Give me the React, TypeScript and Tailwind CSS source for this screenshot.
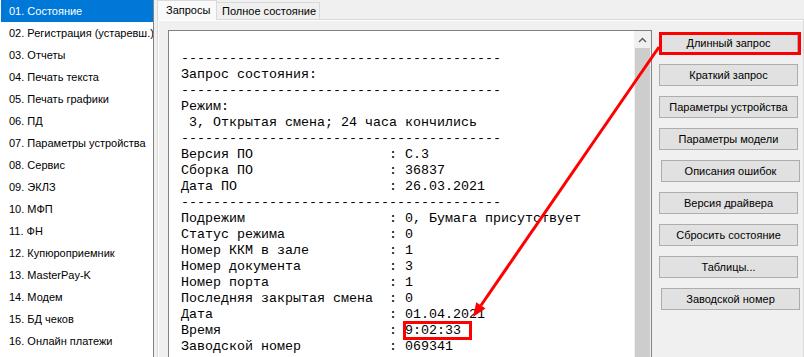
import React from "react";

const items = [
  "01. Состояние",
  "02. Регистрация (устаревш.)",
  "03. Отчеты",
  "04. Печать текста",
  "05. Печать графики",
  "06. ПД",
  "07. Параметры устройства",
  "08. Сервис",
  "09. ЭКЛЗ",
  "10. МФП",
  "11. ФН",
  "12. Купюроприемник",
  "13. MasterPay-K",
  "14. Модем",
  "15. БД чеков",
  "16. Онлайн платежи",
];

const dash = "-".repeat(40);
const pad = (s: string) => s + " ".repeat(Math.max(0, 26 - s.length));

const lines: string[] = [
  "",
  dash,
  "Запрос состояния:",
  dash,
  "Режим:",
  " 3, Открытая смена; 24 часа кончились",
  dash,
  pad("Версия ПО") + ": C.3",
  pad("Сборка ПО") + ": 36837",
  pad("Дата ПО") + ": 26.03.2021",
  dash,
  pad("Подрежим") + ": 0, Бумага присутствует",
  pad("Статус режима") + ": 0",
  pad("Номер ККМ в зале") + ": 1",
  pad("Номер документа") + ": 3",
  pad("Номер порта") + ": 1",
  pad("Последняя закрытая смена") + ": 0",
  pad("Дата") + ": 01.04.2021",
  pad("Время") + ": 9:02:33",
  pad("Заводской номер") + ": 069341",
];

const buttons: { label: string; shift?: boolean }[] = [
  { label: "Длинный запрос" },
  { label: "Краткий запрос" },
  { label: "Параметры устройства" },
  { label: "Параметры модели" },
  { label: "Описания ошибок", shift: true },
  { label: "Версия драйвера" },
  { label: "Сбросить состояние" },
  { label: "Таблицы..." },
  { label: "Заводской номер", shift: true },
];

export default function App() {
  return (
    <div className="relative w-[804px] h-[357px] overflow-hidden flex bg-[#f0f0f0] font-['Liberation_Sans',Arial,sans-serif] text-[11px] text-black">
      {/* Left list */}
      <div className="w-[154px] shrink-0 h-full bg-white border-r border-[#828282] flex flex-col">
        {items.map((t, i) => (
          <div
            key={t}
            className={
              i === 0
                ? "h-[22px] ml-[1px] pl-[8px] flex items-center whitespace-nowrap overflow-hidden bg-[#0078d7] text-white"
                : "h-[22px] ml-[1px] pl-[8px] flex items-center whitespace-nowrap overflow-hidden"
            }
          >
            {t}
          </div>
        ))}
      </div>

      {/* Right area */}
      <div className="flex-1 flex flex-col pl-[3px]">
        {/* Tabs */}
        <div className="h-[19px] flex items-end shrink-0">
          <div className="h-[20px] -mb-[1px] w-[60px] bg-[#f9f9f9] border-l border-t border-r border-[#d9d9d9] flex items-center pl-[8px] whitespace-nowrap relative z-10">
            Запросы
          </div>
          <div className="h-[17px] w-[103px] bg-[#f0f0f0] border-t border-r border-[#d9d9d9] flex items-center pl-[5px] whitespace-nowrap">
            Полное состояние
          </div>
        </div>
        {/* Pane */}
        <div className="flex-1 border border-[#d9d9d9] bg-[#f0f0f0]">
          <div className="h-full border-t border-l border-white flex pl-[9px] pt-[9px]">
            {/* Memo */}
            <div className="w-[484px] h-[340px] shrink-0 border border-[#828282] bg-white flex">
              <div className="flex-1 pl-[12px] pt-[4px] font-['Liberation_Mono','Courier_New',monospace] text-[13.33px] leading-[16px] whitespace-pre">
                {lines.map((l, i) => (
                  <div key={i} className="h-[16px]">
                    {l}
                  </div>
                ))}
              </div>
              <div className="w-[17px] shrink-0 bg-[#f0f0f0] flex flex-col">
                <div className="h-[17px] flex items-center justify-center">
                  <svg width="9" height="6" viewBox="0 0 9 6">
                    <path d="M1 5 L4.5 1.5 L8 5" fill="none" stroke="#606060" strokeWidth="1.5" />
                  </svg>
                </div>
                <div className="flex-1 mx-[1px] bg-[#cdcdcd]" />
              </div>
            </div>
            {/* Buttons */}
            <div className="flex flex-col gap-[10px] ml-[7px] pt-[2px] w-[141px]">
              {buttons.map((b) => (
                <div
                  key={b.label}
                  className={
                    b.shift
                      ? "h-[22px] w-[139px] ml-[2px] bg-[#e1e1e1] border border-[#adadad] flex items-center justify-center whitespace-nowrap"
                      : "h-[22px] w-[139px] bg-[#e1e1e1] border border-[#adadad] flex items-center justify-center whitespace-nowrap"
                  }
                >
                  {b.label}
                </div>
              ))}
            </div>
          </div>
        </div>
      </div>

      {/* Annotations */}
      <div className="absolute left-[659px] top-[32px] w-[142px] h-[23px] border-[3px] border-[#ff0000]" />
      <div className="absolute left-[403px] top-[321px] w-[69px] h-[19px] border-[3px] border-[#ff0000]" />
      <svg className="absolute left-0 top-0 pointer-events-none" width="804" height="357">
        <line x1="659" y1="47" x2="480.9" y2="305.5" stroke="#ff0000" strokeWidth="3" />
        <polygon points="473,317 485.5,308.6 476.3,302.3" fill="#ff0000" />
      </svg>
    </div>
  );
}
